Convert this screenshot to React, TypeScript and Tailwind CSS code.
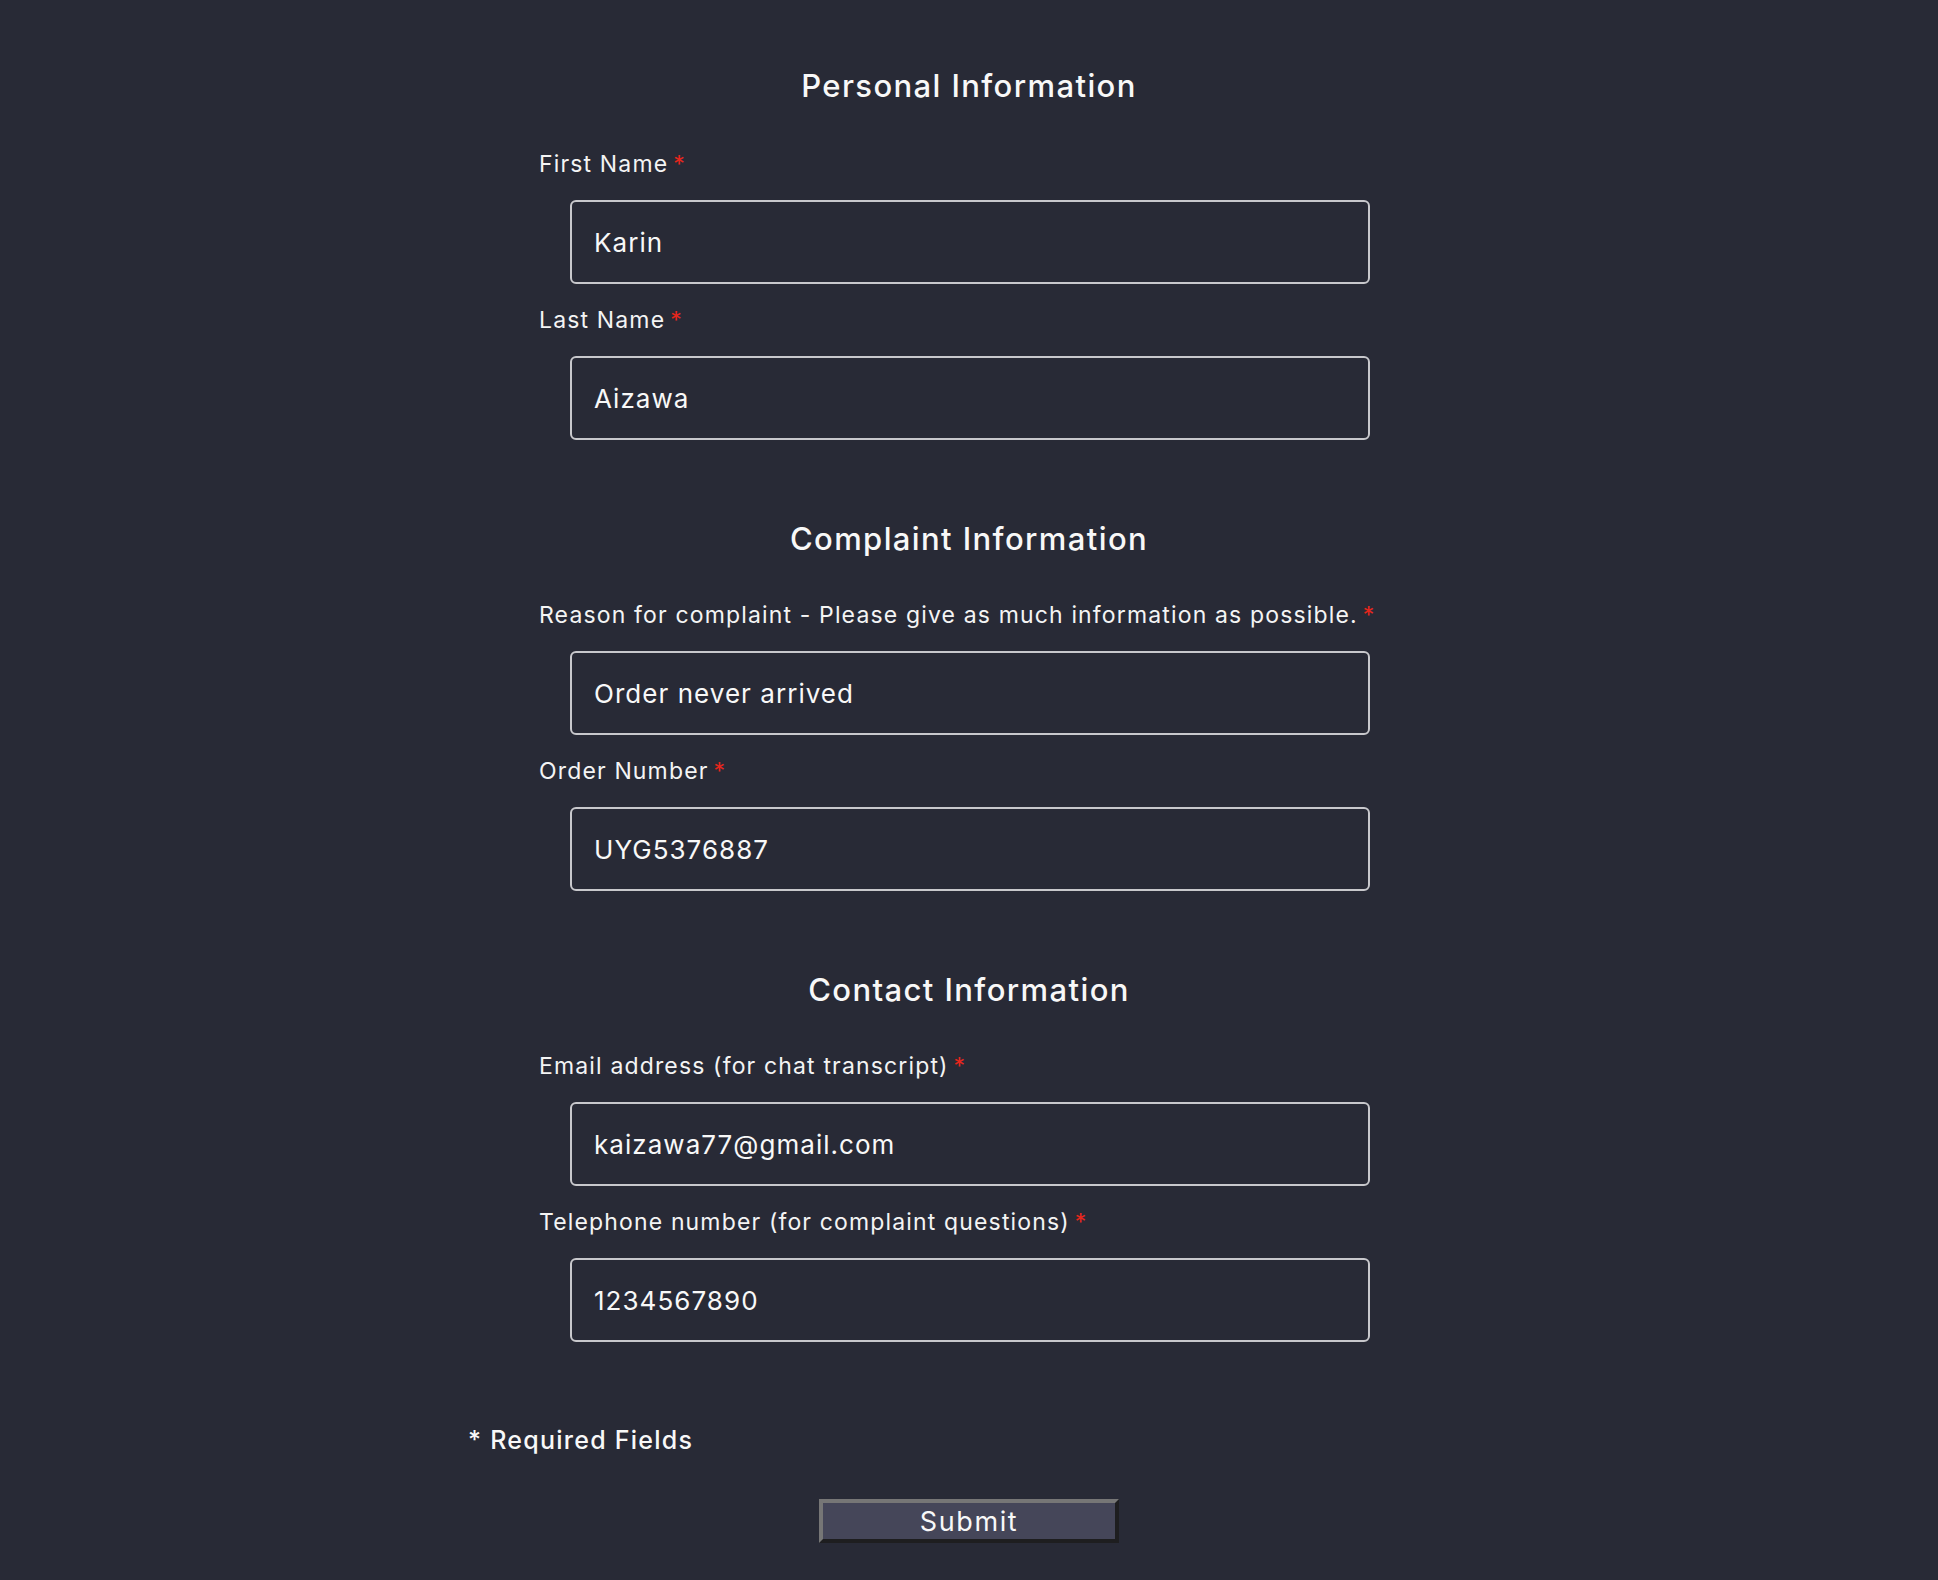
import React from 'react';

type Field = {
	label: string;
	value: string;
};

type Section = {
	title: string;
	fields: Field[];
};

const SECTIONS: Section[] = [
	{
		title: 'Personal Information',
		fields: [
			{ label: 'First Name', value: 'Karin' },
			{ label: 'Last Name', value: 'Aizawa' },
		],
	},
	{
		title: 'Complaint Information',
		fields: [
			{ label: 'Reason for complaint - Please give as much information as possible.', value: 'Order never arrived' },
			{ label: 'Order Number', value: 'UYG5376887' },
		],
	},
	{
		title: 'Contact Information',
		fields: [
			{ label: 'Email address (for chat transcript)', value: 'kaizawa77@gmail.com' },
			{ label: 'Telephone number (for complaint questions)', value: '1234567890' },
		],
	},
];

function FormField({ label, value }: Field) {
	return (
		<div className="flex flex-col">
			<label className="text-[23px] leading-[28px] tracking-[0.05em] text-[#f4f4f4]">
				{label}
				<span className="ml-[5px] text-[#e8261c]">*</span>
			</label>
			<input
				readOnly
				value={value}
				className="mt-[22px] ml-[31px] h-[84px] w-[800px] rounded-[6px] border-2 border-[#c8c8cc] bg-transparent px-[22px] text-[26px] tracking-[0.04em] text-[#f8f8f8] outline-none"
			/>
		</div>
	);
}

function FormSection({ title, fields, first }: Section & { first: boolean }) {
	return (
		<section className="flex flex-col">
			<h2 className="text-center text-[31px] font-medium leading-[34px] tracking-[0.045em] text-[#f8f8f8]">
				{title}
			</h2>
			<div className={`flex flex-col gap-y-[22px] ${first ? 'mt-[47px]' : 'mt-[45px]'}`}>
				{fields.map((field) => (
					<FormField key={field.label} {...field} />
				))}
			</div>
		</section>
	);
}

export default function App() {
	return (
		<div
			className="min-h-screen bg-[#282a36] pt-[69px] pb-[37px]"
			style={{ fontFamily: 'Inter, "Noto Sans", sans-serif' }}
		>
			<form className="mx-auto flex w-[1002px] flex-col" onSubmit={(e) => e.preventDefault()}>
				<div className="flex flex-col gap-y-[82px] px-[71px]">
					{SECTIONS.map((section, i) => (
						<FormSection key={section.title} {...section} first={i === 0} />
					))}
				</div>
				<p className="mt-[83px] text-[25px] font-medium leading-[30px] tracking-[0.05em] text-[#f8f8f8]">
					* Required Fields
				</p>
				<div className="mt-[44px] flex justify-center">
					<button
						type="submit"
						className="h-[44px] w-[300px] border-4 border-t-[#767676] border-l-[#767676] border-b-[#1e1e20] border-r-[#1e1e20] bg-[#454659] text-[27px] leading-none tracking-[0.06em] text-[#f8f8f8]"
					>
						Submit
					</button>
				</div>
			</form>
		</div>
	);
}
